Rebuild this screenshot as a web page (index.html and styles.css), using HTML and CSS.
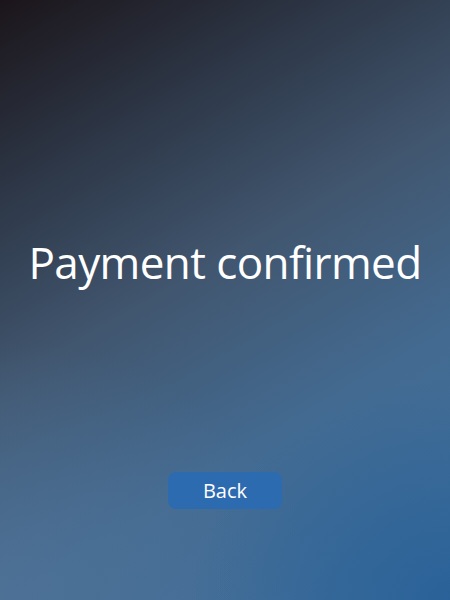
FILE: index.html
```html
<!DOCTYPE html>
<html lang="en">
<head>
<meta charset="utf-8">
<title>Payment confirmed</title>
<link rel="stylesheet" href="styles.css">
</head>
<body>
<main class="screen">
  <h1 class="title">Payment confirmed</h1>
  <button class="back-btn" type="button">Back</button>
</main>
</body>
</html>
```
FILE: styles.css
```css
html, body {
  margin: 0;
  padding: 0;
  width: 450px;
  height: 600px;
  overflow: hidden;
}

.screen {
  width: 450px;
  height: 600px;
  box-sizing: border-box;
  display: flex;
  flex-direction: column;
  align-items: center;
  font-family: "Open Sans", "Noto Sans", "Liberation Sans", sans-serif;
  color: #ffffff;
  background:
    radial-gradient(ellipse 260px 220px at 100% 100%, rgba(38, 96, 152, 0.85) 0%, rgba(38, 96, 152, 0) 100%),
    radial-gradient(ellipse 320px 260px at 0% 100%, rgba(82, 116, 152, 0.7) 0%, rgba(82, 116, 152, 0) 100%),
    linear-gradient(150deg, #1b151a 0%, #2f3a4b 25%, #41566f 45%, #436b92 70%, #3f6e9c 100%);
}

.title {
  margin: 235px 0 0;
  font-size: 44px;
  font-weight: 400;
  line-height: 55px;
  letter-spacing: -0.6px;
}

.back-btn {
  margin-top: 182px;
  width: 114px;
  height: 37px;
  border: none;
  border-radius: 8px;
  background: #2d6bb0;
  color: #ffffff;
  font-family: "Open Sans", "Noto Sans", "Liberation Sans", sans-serif;
  font-size: 20px;
  line-height: 37px;
  padding: 0;
}
```
